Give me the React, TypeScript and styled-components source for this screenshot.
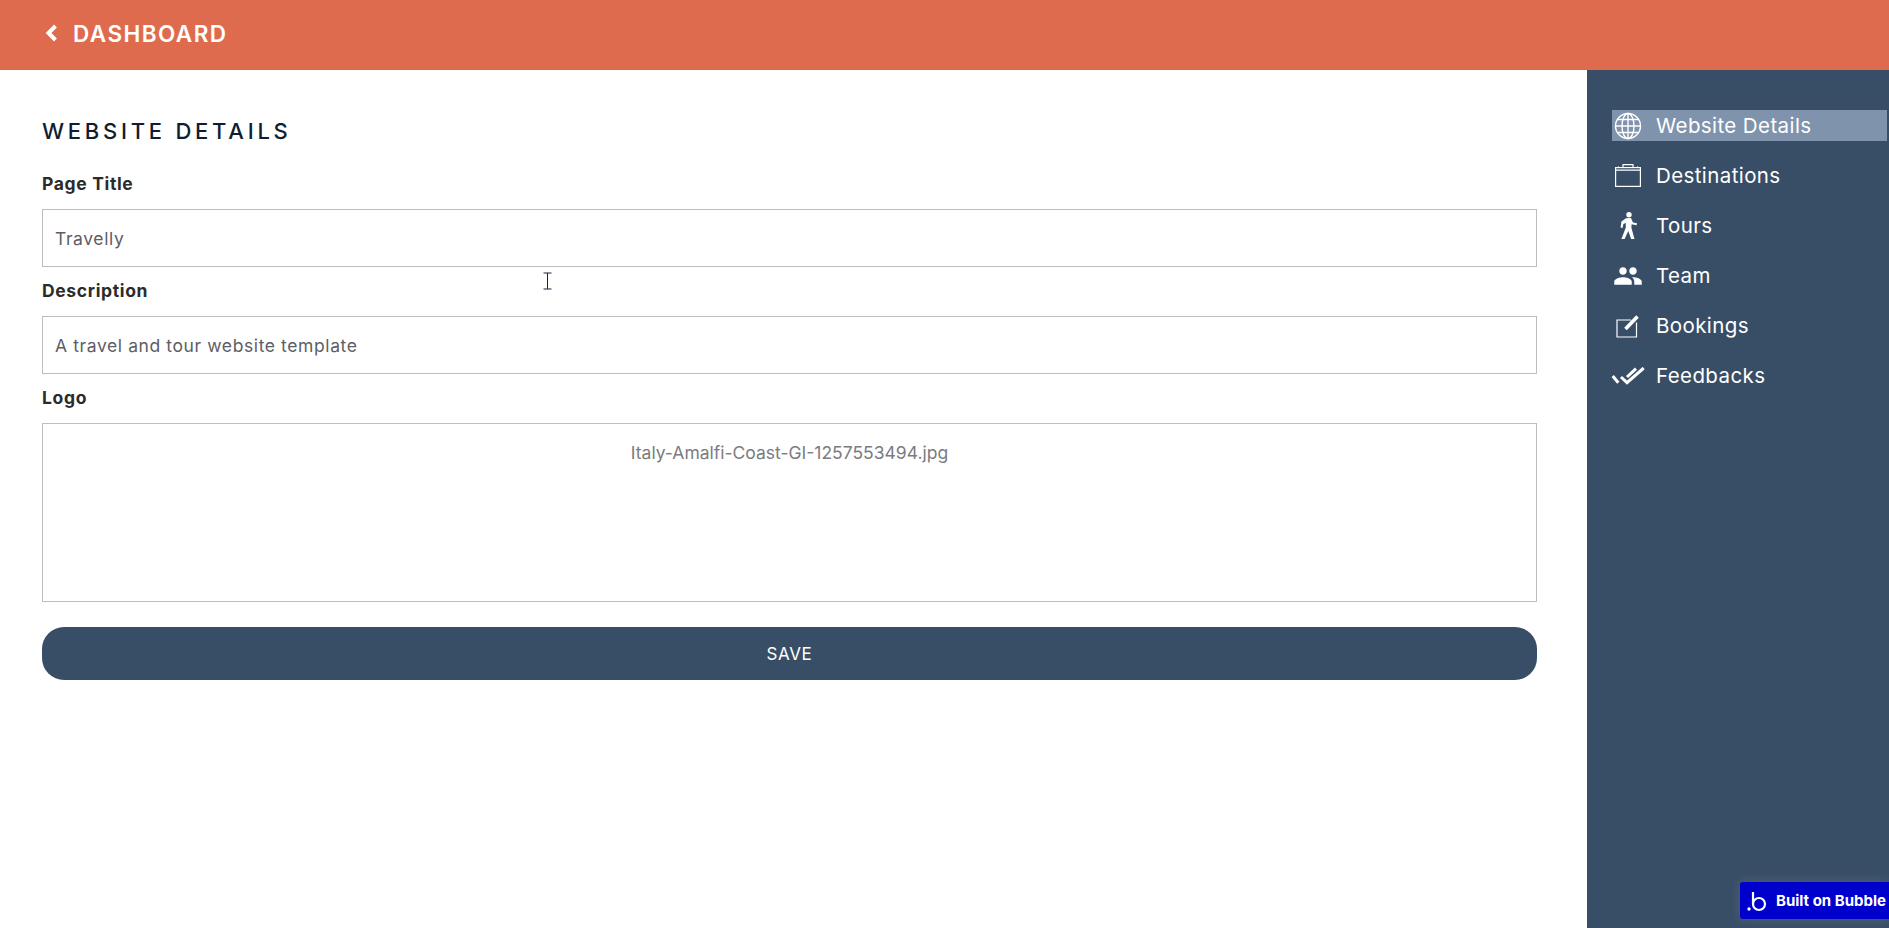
import React from "react";
import styled, { createGlobalStyle } from "styled-components";
import { MdPeople } from "react-icons/md";

const GlobalStyle = createGlobalStyle`
  html, body {
    margin: 0;
    padding: 0;
    height: 100%;
    background: #fff;
    font-family: "Inter", "Open Sans", sans-serif;
  }
  #root {
    height: 100%;
  }
`;

const Page = styled.div`
  position: relative;
  height: 928px;
  display: flex;
  flex-direction: column;
  overflow: hidden;
`;

const Header = styled.header`
  flex: none;
  height: 70px;
  box-sizing: border-box;
  padding: 0 0 4px 45px;
  background: #de6b4e;
  color: #fff;
  display: flex;
  align-items: center;
  gap: 15px;
  font-size: 22.5px;
  font-weight: 600;
  letter-spacing: 1.45px;
`;

const Body = styled.div`
  flex: 1;
  display: flex;
`;

const Main = styled.main`
  flex: 1;
  padding: 48px 50px 0 42px;
`;

const Title = styled.h1`
  margin: 0 0 30px 0;
  font-size: 22px;
  line-height: 26px;
  font-weight: 500;
  letter-spacing: 3.75px;
  color: #0f1d33;
`;

const Label = styled.label`
  display: block;
  height: 35px;
  line-height: 20px;
  font-size: 17.5px;
  font-weight: 700;
  letter-spacing: 0.65px;
  color: #2b2b2b;
`;

const Input = styled.div`
  box-sizing: border-box;
  height: 58px;
  margin-bottom: 14px;
  padding: 0 12px;
  display: flex;
  align-items: center;
  border: 1px solid #bdbdbd;
  font-size: 17.5px;
  letter-spacing: 0.6px;
  color: #5d5d66;
`;

const Upload = styled.div`
  box-sizing: border-box;
  height: 179px;
  padding-top: 18px;
  text-align: center;
  border: 1px solid #bdbdbd;
  font-size: 17.5px;
  line-height: 21px;
  color: #7b7b80;
`;

const SaveButton = styled.button`
  display: block;
  width: 100%;
  height: 53px;
  margin-top: 25px;
  border: none;
  border-radius: 22px;
  background: #384e67;
  color: #fff;
  font-family: inherit;
  font-size: 17px;
  letter-spacing: 0.6px;
`;

const Sidebar = styled.aside`
  flex: none;
  width: 302px;
  box-sizing: border-box;
  padding: 40px 2px 0 25px;
  background: #384e67;
  display: flex;
  flex-direction: column;
  gap: 19px;
`;

const NavItem = styled.div<{ $active?: boolean }>`
  height: 31px;
  display: flex;
  align-items: center;
  background: ${(p) => (p.$active ? "#7f93ad" : "transparent")};
  color: #fff;
  font-size: 20.5px;
  letter-spacing: 0.4px;
`;

const NavIcon = styled.span`
  flex: none;
  width: 31px;
  margin-right: 13px;
  display: flex;
  justify-content: center;
  svg {
    display: block;
    flex: none;
  }
`;

const BubbleBadge = styled.div`
  position: absolute;
  right: 0;
  bottom: 9px;
  width: 149px;
  height: 37px;
  box-sizing: border-box;
  padding-left: 7px;
  display: flex;
  align-items: center;
  gap: 9px;
  border-radius: 3px 0 0 3px;
  background: #0000cd;
  box-shadow: 0 0 12px rgba(255, 255, 255, 0.12);
  color: #fff;
  font-family: "Inter", "Liberation Sans", sans-serif;
  font-size: 15px;
  font-weight: 700;
  white-space: nowrap;
`;

const IBeam = styled.svg`
  position: absolute;
  left: 543px;
  top: 272px;
`;

const Globe = () => (
  <svg width="28" height="28" viewBox="0 0 28 28" fill="none" stroke="#fff" strokeWidth="1.4">
    <circle cx="14" cy="14" r="12.5" />
    <ellipse cx="14" cy="14" rx="6" ry="12.5" />
    <path d="M14 1.5v25M1.5 14h25M3.5 7.5h21M3.5 20.5h21" />
  </svg>
);

const Briefcase = () => (
  <svg width="26" height="23" viewBox="0 0 26 23" fill="none" stroke="#fff" strokeWidth="1.2">
    <rect x="0.6" y="3.6" width="24.8" height="18.8" />
    <path d="M8 3.6V0.6h10v3M0.6 6.2h24.8M3.5 2.6v1M22.5 2.6v1" />
  </svg>
);

const Walker = () => (
  <svg width="18" height="27" viewBox="0 0 18 27" fill="#fff">
    <circle cx="10" cy="2.8" r="2.7" />
    <path d="M7 6.2L12 6l2 4.4 4 .8-.4 2-5-1-.2 3.6L15.5 27h-3.4l-2.8-8L5.6 27H2.4l4.4-11.4V11l-2.4 1-.8 4-2-.4.8-6z" />
  </svg>
);

const Pencil = () => (
  <svg width="24" height="24" viewBox="0 0 24 24" fill="none" stroke="#fff">
    <path d="M20.5 8.5V23H1V6H15" strokeWidth="1.2" />
    <path d="M9.5 15L21.5 2.5" strokeWidth="3.6" />
  </svg>
);

const DoubleCheck = () => (
  <svg width="34" height="18" viewBox="0 0 34 18" fill="none" stroke="#fff" strokeWidth="3">
    <path d="M1.7 9l5.6 6.7M10 10l6 5.7L32.7 1M16 10l9-8.3" />
  </svg>
);

const navItems = [
  { label: "Website Details", icon: <Globe />, active: true },
  { label: "Destinations", icon: <Briefcase /> },
  { label: "Tours", icon: <Walker /> },
  { label: "Team", icon: <MdPeople size={30} color="#fff" /> },
  { label: "Bookings", icon: <Pencil /> },
  { label: "Feedbacks", icon: <DoubleCheck /> },
];

export default function App() {
  return (
    <Page>
      <GlobalStyle />
      <Header>
        <svg width="13" height="18" viewBox="0 0 13 18" fill="none" stroke="#fff" strokeWidth="4">
          <path d="M10.5 2L3.5 9l7 7" />
        </svg>
        DASHBOARD
      </Header>
      <Body>
        <Main>
          <Title>WEBSITE DETAILS</Title>
          <Label>Page Title</Label>
          <Input>Travelly</Input>
          <Label>Description</Label>
          <Input>A travel and tour website template</Input>
          <Label>Logo</Label>
          <Upload>Italy-Amalfi-Coast-GI-1257553494.jpg</Upload>
          <SaveButton>SAVE</SaveButton>
        </Main>
        <Sidebar>
          {navItems.map((item) => (
            <NavItem key={item.label} $active={item.active}>
              <NavIcon>{item.icon}</NavIcon>
              {item.label}
            </NavItem>
          ))}
        </Sidebar>
      </Body>
      <IBeam width="9" height="18" viewBox="0 0 9 18" fill="none" stroke="#16233a" strokeWidth="1">
        <path d="M0.5 1h8M0.5 17h8M4.5 1v16" />
      </IBeam>
      <BubbleBadge>
        <svg width="20" height="24" viewBox="0 0 20 24" fill="none" stroke="#fff" strokeWidth="2.2">
          <circle cx="12" cy="15" r="6" />
          <path d="M6 3v12" />
          <circle cx="2" cy="20" r="1.7" fill="#fff" stroke="none" />
        </svg>
        Built on Bubble
      </BubbleBadge>
    </Page>
  );
}
